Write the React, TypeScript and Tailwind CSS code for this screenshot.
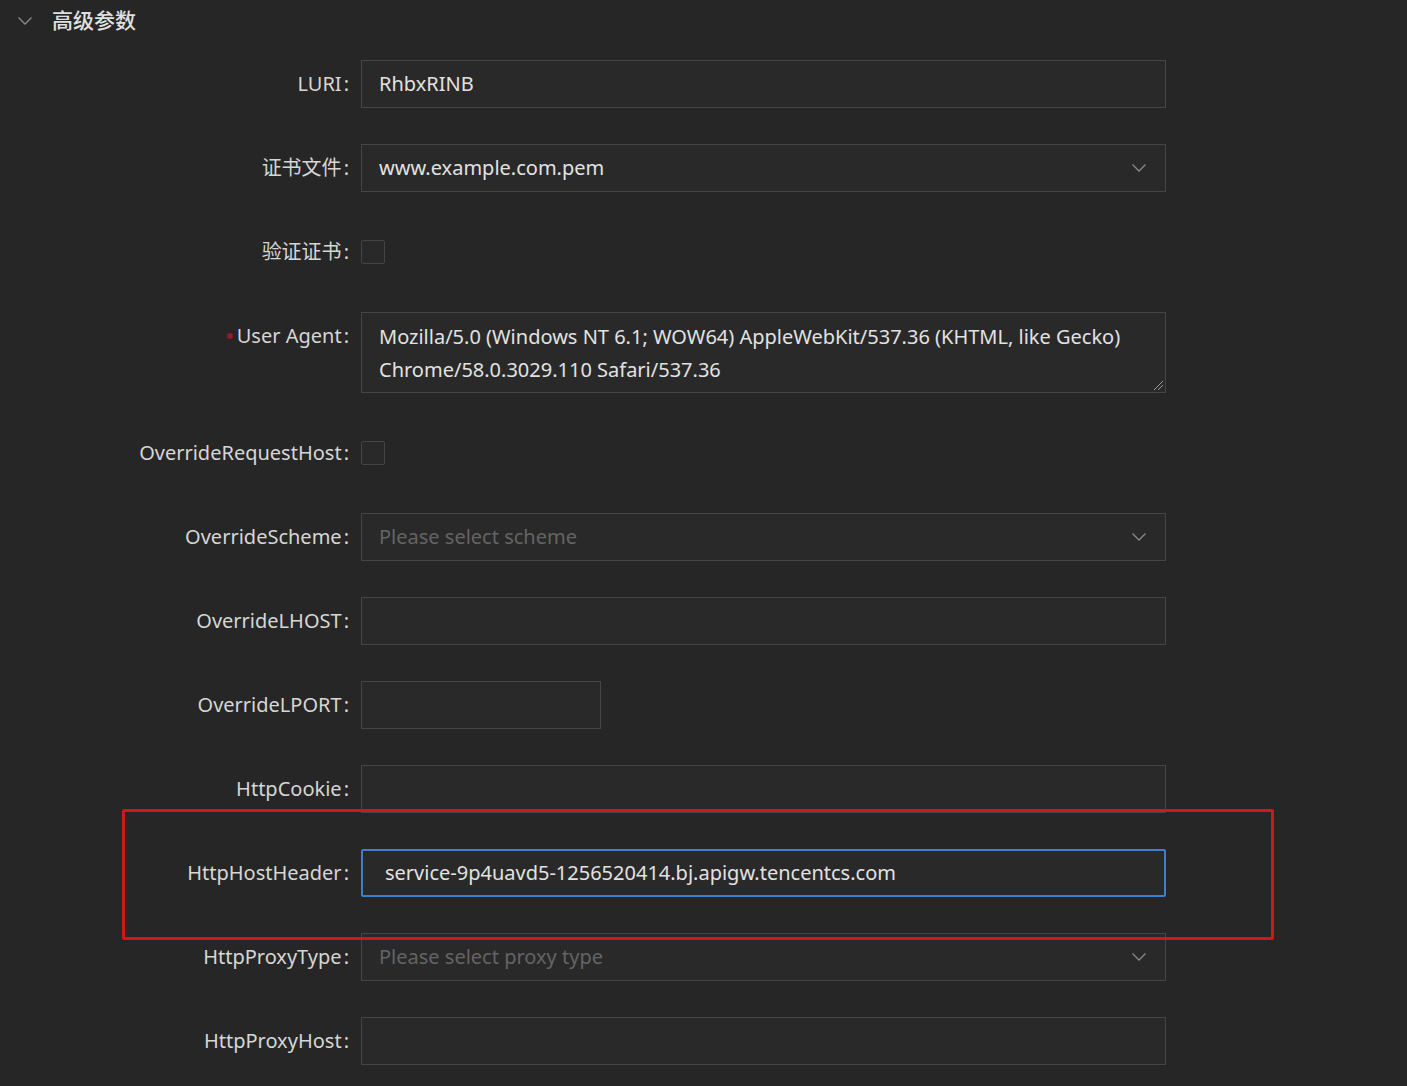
import { ReactNode } from "react";

const font = { fontFamily: '"Noto Sans", "Noto Sans CJK SC", sans-serif' };

function Chevron() {
  return (
    <svg width="16" height="10" viewBox="0 0 16 10" fill="none" className="shrink-0">
      <path d="M1.5 1.5 L8 8 L14.5 1.5" stroke="#8a8a8a" strokeWidth="1.3" />
    </svg>
  );
}

function Row({
  label,
  required,
  children,
  tall,
}: {
  label: string;
  required?: boolean;
  children: ReactNode;
  tall?: boolean;
}) {
  return (
    <div className="flex">
      <div
        className={`w-[350px] shrink-0 flex justify-end items-center pr-[1px] text-[20px] text-[#d6d6d6] ${
          tall ? "self-start h-[48px]" : "h-[48px]"
        }`}
      >
        {required && <span className="w-[6px] h-[6px] rounded-full bg-[#8e1c2c] mr-[4px]" />}
        <span>{label}</span>
        <span className="ml-[2px]">:</span>
      </div>
      <div className="ml-[11px] flex items-center min-h-[48px]">{children}</div>
    </div>
  );
}

function Input({ value, placeholder, w = "w-[805px]", select, focused }: {
  value?: string;
  placeholder?: string;
  w?: string;
  select?: boolean;
  focused?: boolean;
}) {
  return (
    <div
      className={`${w} h-[48px] flex items-center justify-between bg-[#292929] text-[20px] ${
        focused
          ? "border-2 border-[#3a7fd0] pl-[22px] rounded-[2px]"
          : "border border-[#454545] pl-[17px]"
      } pr-[18px]`}
    >
      <span className={value ? "text-[#e2e2e2]" : "text-[#646464]"}>{value ?? placeholder}</span>
      {select && <Chevron />}
    </div>
  );
}

function Checkbox() {
  return <div className="w-[24px] h-[24px] border border-[#444] rounded-[2px] bg-[#292929]" />;
}

export default function App() {
  return (
    <div className="relative w-[1407px] h-[1086px] bg-[#262626] overflow-hidden" style={font}>
      {/* header */}
      <div className="flex items-center h-[42px] pl-[17px] gap-[19px]">
        <Chevron />
        <span className="text-[21px] text-[#e0e0e0] font-medium">高级参数</span>
      </div>

      <div className="flex flex-col gap-[36px] mt-[18px]">
        <Row label="LURI">
          <Input value="RhbxRINB" />
        </Row>
        <Row label="证书文件">
          <Input value="www.example.com.pem" select />
        </Row>
        <Row label="验证证书">
          <Checkbox />
        </Row>
        <Row label="User Agent" required tall>
          <div className="relative w-[805px] h-[81px] border border-[#454545] bg-[#292929] pl-[17px] pt-[7px] text-[20px] leading-[33px] text-[#e2e2e2]">
            <div>Mozilla/5.0 (Windows NT 6.1; WOW64) AppleWebKit/537.36 (KHTML, like Gecko)</div>
            <div>Chrome/58.0.3029.110 Safari/537.36</div>
            <svg width="12" height="12" viewBox="0 0 12 12" className="absolute right-[1px] bottom-[1px]">
              <path d="M11 2 L2 11 M11 6 L6 11" stroke="#9a9a9a" strokeWidth="1" />
            </svg>
          </div>
        </Row>
        <Row label="OverrideRequestHost">
          <Checkbox />
        </Row>
        <Row label="OverrideScheme">
          <Input placeholder="Please select scheme" select />
        </Row>
        <Row label="OverrideLHOST">
          <Input value="" />
        </Row>
        <Row label="OverrideLPORT">
          <Input value="" w="w-[240px]" />
        </Row>
        <Row label="HttpCookie">
          <Input value="" />
        </Row>
        <Row label="HttpHostHeader">
          <Input value="service-9p4uavd5-1256520414.bj.apigw.tencentcs.com" focused />
        </Row>
        <Row label="HttpProxyType">
          <Input placeholder="Please select proxy type" select />
        </Row>
        <Row label="HttpProxyHost">
          <Input value="" />
        </Row>
      </div>

      {/* annotation box */}
      <div className="absolute left-[122px] top-[809px] w-[1152px] h-[131px] border-[3px] border-[#d01818] rounded-[2px] pointer-events-none" />
    </div>
  );
}
